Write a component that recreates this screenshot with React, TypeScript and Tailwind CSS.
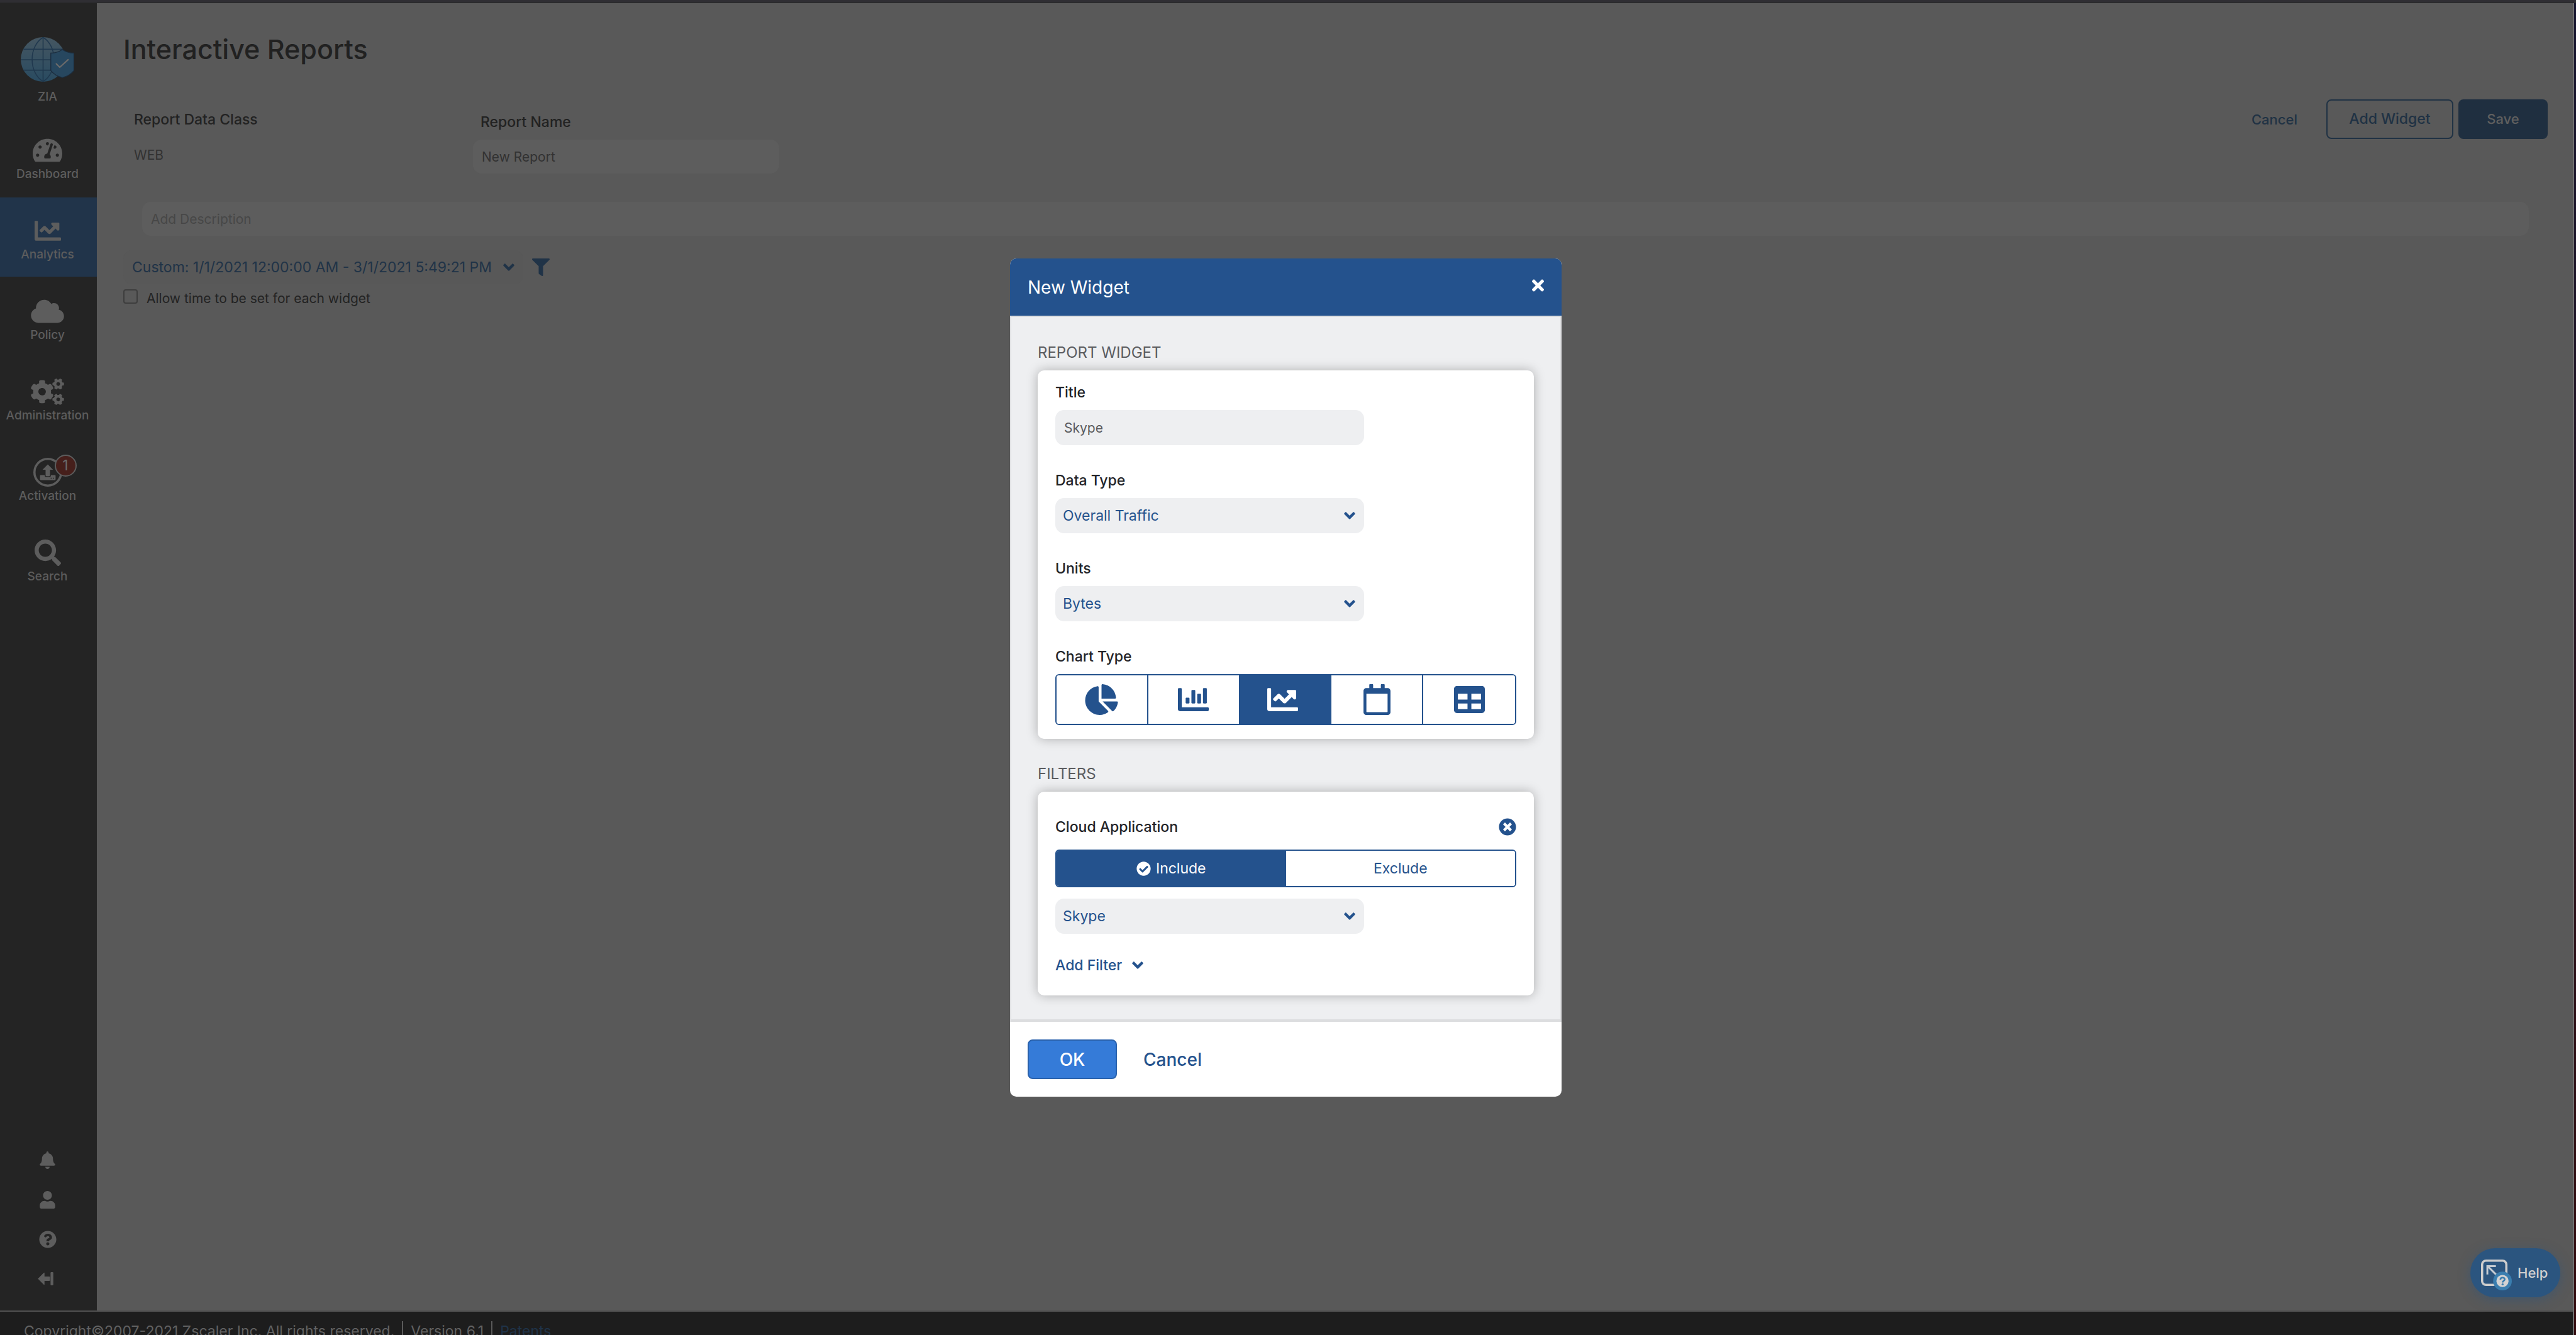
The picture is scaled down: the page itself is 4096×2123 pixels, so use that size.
import React, { useState } from "react";
import {
  FaAngleDown,
  FaBell,
  FaChartBar,
  FaChartLine,
  FaChartPie,
  FaCheckCircle,
  FaCloud,
  FaCogs,
  FaFilter,
  FaQuestionCircle,
  FaRegCalendar,
  FaSearch,
  FaTable,
  FaTachometerAlt,
  FaTimes,
  FaTimesCircle,
  FaUser,
} from "react-icons/fa";

function ZiaLogo() {
  return (
    <svg viewBox="0 0 97 81" className="h-[71px] w-[85px]" aria-hidden="true">
      <defs>
        <linearGradient id="globe" x1="0" y1="0" x2="0" y2="1">
          <stop offset="0" stopColor="#455661" />
          <stop offset="1" stopColor="#294b61" />
        </linearGradient>
      </defs>
      <circle cx="40.5" cy="40.5" r="40.5" fill="url(#globe)" />
      <g fill="none" stroke="#20384e" strokeWidth="1.8">
        <path d="M40.5 0V81M0 41H81M5 22H76M5 60H76" />
        <path d="M40.5 0.5C14 16 14 65 40.5 80.5M40.5 0.5C67 16 67 65 40.5 80.5" />
      </g>
      <path
        d="M75.5 22.5C69 27 62 29 54.5 29V60.5C59 66.500 66 71 75.5 73.500C85 71 92 66.500 96.500 60.500V29C89 29 82 27 75.500 22.500Z"
        fill="#27475f"
        stroke="#1c2d3e"
        strokeWidth="1.5"
      />
      <path
        d="M64.500 48.500L70.800 54.800L86 41"
        fill="none"
        stroke="#6a6a6a"
        strokeWidth="2.600"
        strokeLinecap="round"
        strokeLinejoin="round"
      />
    </svg>
  );
}

function ActivationIcon() {
  return (
    <span className="relative block">
      <svg viewBox="0 0 52 52" className="h-[46px] w-[46px]" aria-hidden="true">
        <circle cx="26" cy="26" r="24" fill="none" stroke="currentColor" strokeWidth="4" />
        <path
          fill="currentColor"
          fillRule="evenodd"
          d="M26 12L35.500 21.500H30V31.500Q30 33 28.500 33H23.500Q22 33 22 31.500V21.500H16.500ZM13.300 31H20.500V32.500Q20.500 34.500 22.500 34.500H29.500Q31.500 34.500 31.500 32.500V31H38.700Q40 31 40 32.300V38.700Q40 40 38.700 40H13.300Q12 40 12 38.700V32.300Q12 31 13.300 31ZM31.200 35.900V37.500H33V35.900ZM35.200 35.900V37.500H37V35.900Z"
        />
      </svg>
      <span className="absolute -top-[5px] left-[34px] flex h-[35px] w-[35px] items-center justify-center rounded-full border-2 border-[#5c5c5c] bg-[#461f1b] text-[23px] leading-none text-[#6a6a6a]">
        1
      </span>
    </span>
  );
}

function LogoutIcon() {
  return (
    <svg viewBox="0 0 36 24" className="h-[21px] w-[32px]" fill="currentColor" aria-hidden="true">
      <path d="M0 12L10.500 1.300Q12 0.300 12 2V8H20.500Q22 8 22 9.500V14.500Q22 16 20.500 16H12V22Q12 23.700 10.500 22.700Z" />
      <rect x="23" y="0" width="5" height="24" rx="1.500" />
    </svg>
  );
}

function HelpIcon() {
  return (
    <svg viewBox="0 0 56 48" className="h-[42px] w-[49px] overflow-visible" fill="none" aria-hidden="true">
      <rect x="2" y="2" width="44" height="44" rx="7" stroke="#cdcdcd" strokeWidth="4" />
      <path d="M11.500 27V12H27M12 12L29 29" stroke="#c4cbd2" strokeWidth="3.400" />
      <circle cx="39" cy="39" r="17" fill="#3a7eaf" />
      <circle cx="39" cy="39" r="11" fill="#d3d3d3" />
      <path
        d="M35.200 36.500C35.200 31.800 43 31.800 43 36C43 38.800 39.200 38.600 39.200 41.800"
        stroke="#3a7eaf"
        strokeWidth="3"
      />
      <circle cx="39.200" cy="45" r="1.900" fill="#3a7eaf" />
    </svg>
  );
}

const navItems = [
  { label: "Dashboard", icon: <FaTachometerAlt className="h-[42px] w-[47px]" /> },
  { label: "Analytics", icon: <FaChartLine className="h-[42px] w-[42px]" />, active: true },
  { label: "Policy", icon: <FaCloud className="h-[42px] w-[53px]" /> },
  { label: "Administration", icon: <FaCogs className="h-[42px] w-[53px]" /> },
  { label: "Activation", icon: <ActivationIcon /> },
  { label: "Search", icon: <FaSearch className="h-[42px] w-[42px]" /> },
];

const utilityItems = [
  { label: "Notifications", icon: <FaBell className="h-7 w-[25px]" /> },
  { label: "Account", icon: <FaUser className="h-7 w-[25px]" /> },
  { label: "Support", icon: <FaQuestionCircle className="h-7 w-7" /> },
  { label: "Log out", icon: <LogoutIcon /> },
];

function Sidebar() {
  return (
    <aside className="flex w-[154px] shrink-0 flex-col bg-[#242424] text-[#5d5d5d]">
      <div className="flex flex-col items-center gap-3 pr-[3px] pt-[54px] pb-5">
        <ZiaLogo />
        <span className="text-[19px] leading-6 font-medium">ZIA</span>
      </div>
      <nav className="flex flex-col gap-[2px]">
        {navItems.map((item) => (
          <a
            key={item.label}
            href="#"
            className={
              "flex h-[126px] flex-col items-center gap-[5px] pt-8 pr-[3px] " + (item.active ? "bg-[#21344a]" : "")
            }
          >
            <span className="flex h-[42px] items-center justify-center">{item.icon}</span>
            <span className="text-[19px] leading-6 font-medium">{item.label}</span>
          </a>
        ))}
      </nav>
      <div className="mt-auto flex flex-col pr-[3px] pb-[19px]">
        {utilityItems.map((item) => (
          <button key={item.label} type="button" aria-label={item.label} className="flex h-[63px] items-center justify-center">
            {item.icon}
          </button>
        ))}
      </div>
    </aside>
  );
}

function ReportPage() {
  return (
    <main className="flex min-w-0 grow flex-col bg-[#595959] pt-[45px] pl-[42px]">
      <h1 className="text-[43px] leading-[56px] font-medium text-[#212121]">Interactive Reports</h1>

      <div className="mt-[52px] flex items-start pr-10">
        <div className="flex w-[556px] shrink-0 flex-col gap-[25px] pt-4 pl-[17px]">
          <span className="text-[23px] leading-8 font-medium text-[#222]">Report Data Class</span>
          <span className="text-[21px] leading-8 text-[#323232]">WEB</span>
        </div>
        <div className="flex w-[487px] shrink-0 flex-col gap-3 pt-5">
          <label htmlFor="report-name" className="pl-3 text-[23px] leading-8 font-medium text-[#222]">
            Report Name
          </label>
          <input
            id="report-name"
            type="text"
            defaultValue="New Report"
            className="h-[54px] rounded-[14px] bg-[#5d5d5d] px-[14px] text-[21px] text-[#323232] outline-none"
          />
        </div>
        <div className="ml-auto flex items-center">
          <button type="button" className="mr-[46px] text-[22px] leading-8 font-medium text-[#203244]">
            Cancel
          </button>
          <button
            type="button"
            className="h-[63px] w-[202px] rounded-lg border-2 border-[#203244] text-[23px] font-medium text-[#203244]"
          >
            Add Widget
          </button>
          <button type="button" className="ml-2 h-[63px] w-[142px] rounded-lg bg-[#1f2f40] text-[22px] font-medium text-[#5f5f5f]">
            Save
          </button>
        </div>
      </div>

      <input
        type="text"
        aria-label="Description"
        placeholder="Add Description"
        className="mt-[45px] mr-[70px] ml-[30px] h-[54px] rounded-[14px] bg-[#5d5d5d] px-[14px] text-[21px] text-[#323232] outline-none placeholder:text-[#474747]"
      />

      <div className="mt-[23px] flex items-center gap-[14px]">
        <button
          type="button"
          className="flex h-[54px] items-center gap-[18px] rounded-[14px] bg-[#585858] px-[14px] text-[23px] whitespace-nowrap text-[#203347]"
        >
          Custom: 1/1/2021 12:00:00 AM - 3/1/2021 5:49:21 PM
          <FaAngleDown className="h-7 w-[18px]" />
        </button>
        <button type="button" aria-label="Filter" className="text-[#203347]">
          <FaFilter className="h-7 w-7" />
        </button>
      </div>

      <div className="mt-2 flex items-start gap-[14px]">
        <input
          id="per-widget-time"
          type="checkbox"
          className="h-[23px] w-[23px] appearance-none rounded border-2 border-[#3e3e3e]"
        />
        <label htmlFor="per-widget-time" className="text-[21px] leading-[30px] text-[#232323]">
          Allow time to be set for each widget
        </label>
      </div>
    </main>
  );
}

function SelectBox({ id, label, options }: { id: string; label?: string; options: string[] }) {
  return (
    <span className="relative block w-[491px]">
      <select
        id={id}
        aria-label={label}
        className="block h-14 w-full appearance-none rounded-[14px] bg-[#eeeff1] px-3 text-[23px] text-[#24528d] outline-none"
      >
        {options.map((o) => (
          <option key={o}>{o}</option>
        ))}
      </select>
      <FaAngleDown className="pointer-events-none absolute top-[14px] right-[14px] h-7 w-[18px] text-[#24528d]" />
    </span>
  );
}

const labelClass = "text-[23px] leading-8 font-medium text-[#222327]";
const cardClass = "flex flex-col rounded-[10px] bg-white px-7 shadow-[0_0_18px_rgba(0,0,0,0.28)]";

const chartTypes = [
  { label: "Pie", icon: <FaChartPie className="h-[49px] w-[55px]" /> },
  { label: "Bar", icon: <FaChartBar className="h-[49px] w-[49px]" /> },
  { label: "Line", icon: <FaChartLine className="h-[49px] w-[49px]" /> },
  { label: "Calendar", icon: <FaRegCalendar className="h-[49px] w-[43px]" /> },
  { label: "Table", icon: <FaTable className="h-[49px] w-[49px]" /> },
];

function NewWidgetDialog() {
  const [chart, setChart] = useState("Line");
  const [mode, setMode] = useState("Include");
  return (
    <div role="dialog" aria-labelledby="dialog-title" className="flex w-[877px] flex-col overflow-hidden rounded-[10px] bg-white">
      <header className="flex h-[91px] items-center justify-between bg-[#24528d] px-7 text-white">
        <h2 id="dialog-title" className="text-[28px] leading-10">
          New Widget
        </h2>
        <button type="button" aria-label="Close" className="pb-[6px]">
          <FaTimes className="h-7 w-[19px]" />
        </button>
      </header>

      <div className="flex flex-col border-2 border-b-4 border-[#dcdddf] bg-[#eeeff1] px-[42px] pt-[41px] pb-[38px]">
        <h3 className="text-[24px] leading-8 text-[#5b5c5f]">REPORT WIDGET</h3>
        <section className={cardClass + " mt-3 gap-10 pt-[19px] pb-[22px]"}>
          <div className="flex flex-col gap-3">
            <label htmlFor="title" className={labelClass}>
              Title
            </label>
            <input
              id="title"
              type="text"
              defaultValue="Skype"
              className="h-14 w-[491px] rounded-[14px] bg-[#eeeff1] px-[14px] text-[21px] text-[#5a5b5e] outline-none"
            />
          </div>
          <div className="flex flex-col gap-3">
            <label htmlFor="data-type" className={labelClass}>
              Data Type
            </label>
            <SelectBox id="data-type" options={["Overall Traffic"]} />
          </div>
          <div className="flex flex-col gap-3">
            <label htmlFor="units" className={labelClass}>
              Units
            </label>
            <SelectBox id="units" options={["Bytes"]} />
          </div>
          <div className="flex flex-col gap-3">
            <span id="chart-type" className={labelClass}>
              Chart Type
            </span>
            <div
              role="group"
              aria-labelledby="chart-type"
              className="grid h-[81px] grid-cols-5 divide-x-2 divide-[#24528d] overflow-hidden rounded-md border-2 border-[#24528d]"
            >
              {chartTypes.map((c) => (
                <button
                  key={c.label}
                  type="button"
                  aria-label={c.label}
                  aria-pressed={chart === c.label}
                  onClick={() => setChart(c.label)}
                  className={
                    "flex items-center justify-center " +
                    (chart === c.label ? "bg-[#24528d] pr-2 text-white" : "bg-white text-[#24528d]")
                  }
                >
                  {c.icon}
                </button>
              ))}
            </div>
          </div>
        </section>

        <h3 className="mt-10 text-[24px] leading-8 text-[#5b5c5f]">FILTERS</h3>
        <section className={cardClass + " mt-3 pt-10 pb-8"}>
          <div className="flex items-center justify-between">
            <span className={labelClass}>Cloud Application</span>
            <button type="button" aria-label="Remove filter" className="text-[#24528d]">
              <FaTimesCircle className="h-7 w-7" />
            </button>
          </div>
          <div className="mt-5 grid h-[60px] grid-cols-2 overflow-hidden rounded-md border-2 border-[#24528d] text-[23px]">
            {["Include", "Exclude"].map((m) => (
              <button
                key={m}
                type="button"
                aria-pressed={mode === m}
                onClick={() => setMode(m)}
                className={
                  "flex items-center justify-center gap-2 " +
                  (mode === m ? "bg-[#24528d] text-white" : "bg-white text-[#24528d]")
                }
              >
                {mode === m && <FaCheckCircle className="h-[23px] w-[23px]" />}
                {m}
              </button>
            ))}
          </div>
          <div className="mt-[18px]">
            <SelectBox id="cloud-application" label="Cloud Application" options={["Skype"]} />
          </div>
          <button
            type="button"
            className="mt-[34px] flex items-center gap-4 self-start text-[23px] leading-8 font-medium text-[#24528d]"
          >
            Add Filter
            <FaAngleDown className="h-7 w-[18px]" />
          </button>
        </section>
      </div>

      <footer className="flex items-center gap-[42px] px-7 pt-7 pb-7">
        <button
          type="button"
          className="h-[63px] w-[142px] rounded-lg border-2 border-[#2a62ad] bg-[#357bd8] text-[28px] font-medium text-white"
        >
          OK
        </button>
        <button type="button" className="text-[28px] leading-10 font-medium text-[#24528d]">
          Cancel
        </button>
      </footer>
    </div>
  );
}

export default function App() {
  return (
    <div
      className="relative flex h-screen flex-col overflow-hidden bg-[#1d1d1d]"
      style={{ fontFamily: 'Inter, "Liberation Sans", sans-serif' }}
    >
      <div className="h-[5px] shrink-0 border-b border-[#272727] bg-[#2f2e33]" />
      <div className="flex min-h-0 grow">
        <div className="flex min-w-0 grow flex-col">
          <div className="flex min-h-0 grow">
            <Sidebar />
            <ReportPage />
          </div>
          <footer className="flex h-[39px] shrink-0 items-start gap-3 overflow-hidden border-t-2 border-[#505050] bg-[#1d1d1d] pt-[15px] pl-[38px] text-[23px] leading-8 whitespace-nowrap text-[#626262]">
            <span>Copyright©2007-2021 Zscaler Inc. All rights reserved.</span>
            <span className="h-8 w-[2px] bg-[#5a5a5a]" />
            <span>Version 6.1</span>
            <span className="h-8 w-[2px] bg-[#5a5a5a]" />
            <a href="#" className="text-[#1f3349]">
              Patents
            </a>
          </footer>
        </div>
        <div className="w-[5px] shrink-0 border-l-2 border-[#707070] bg-linear-to-b from-[#16162f] to-[#330b0e]" />
      </div>

      <div className="absolute inset-0 flex items-start justify-center pt-[411px] pr-[7px]">
        <NewWidgetDialog />
      </div>

      <button
        type="button"
        className="absolute right-[25px] bottom-[60px] flex h-[78px] w-[143px] items-center gap-[9px] rounded-full bg-[#2b557f] pl-[17px] text-[22px] font-medium text-[#cfcfcf] shadow-[0_4px_18px_rgba(43,85,127,0.5)]"
      >
        <HelpIcon />
        Help
      </button>
    </div>
  );
}
